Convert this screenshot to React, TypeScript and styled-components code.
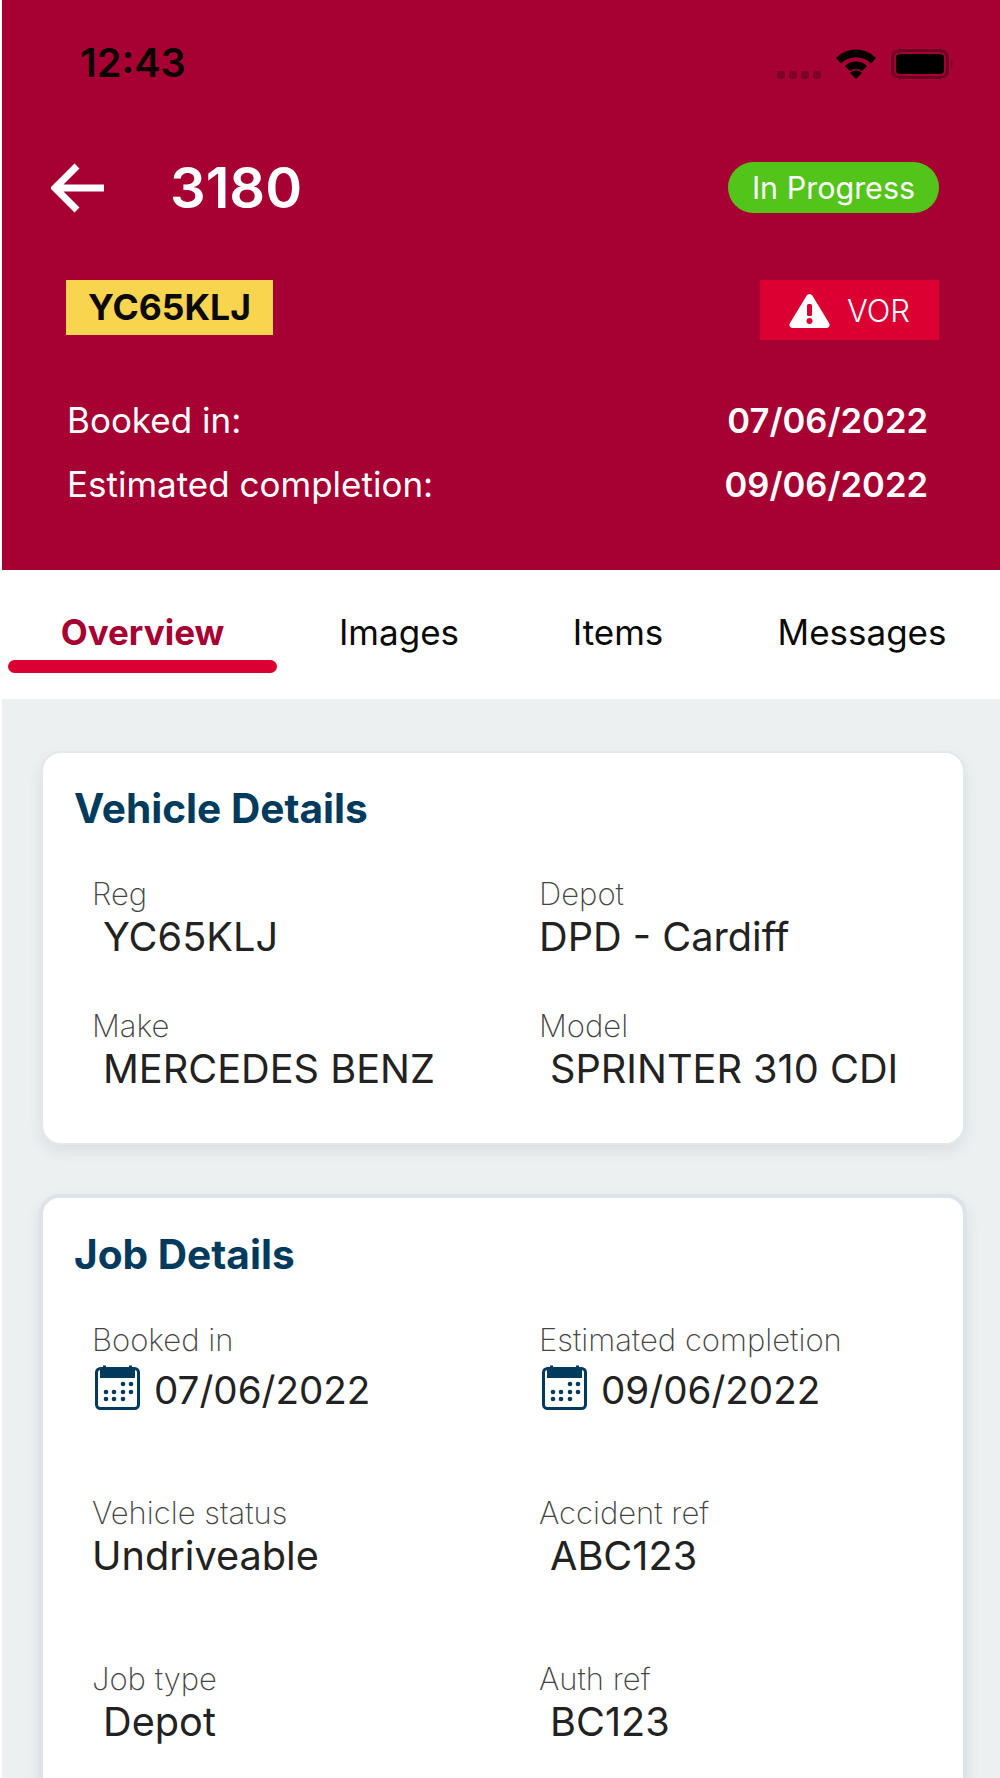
import React from "react";
import styled, { createGlobalStyle } from "styled-components";

const GlobalStyle = createGlobalStyle`
  html, body {
    margin: 0;
    padding: 0;
    background: #fff;
    height: 1778px;
    overflow: hidden;
  }
  * { box-sizing: border-box; }
`;

const Page = styled.div`
  width: 1000px;
  height: 1778px;
  overflow: hidden;
  padding-left: 2px;
  font-family: Inter, "Liberation Sans", sans-serif;
  background: #fff;
`;

///////////////////////
// Header
///////////////////////
const Header = styled.header`
  height: 570px;
  background: #a70033;
  color: #fff;
`;

const StatusBar = styled.div`
  height: 156px;
  padding: 40px 45px 0 78px;
  display: flex;
  justify-content: space-between;
  align-items: flex-start;
`;

const Clock = styled.div`
  font-size: 39.7px;
  line-height: 46px;
  font-weight: 600;
  color: #0a0006;
`;

const StatusIcons = styled.div`
  display: flex;
  align-items: flex-end;
  gap: 14px;
  margin-top: 7px;
`;

const TitleRow = styled.div`
  height: 64px;
  padding: 0 61px 0 49px;
  display: flex;
  align-items: center;
`;

const BackButton = styled.div`
  width: 119px;
  height: 52px;
  display: flex;
  align-items: center;
`;

const JobNumber = styled.h1`
  flex: 1;
  margin: 0;
  font-size: 56px;
  line-height: 64px;
  font-weight: 600;
`;

const StatusPill = styled.div`
  width: 211px;
  height: 51px;
  margin-top: -2px;
  border-radius: 26px;
  background: #52c41a;
  display: flex;
  align-items: center;
  justify-content: center;
  font-size: 30.5px;
`;

const PlateRow = styled.div`
  margin-top: 60px;
  padding: 0 61px 0 64px;
  display: flex;
  justify-content: space-between;
  align-items: flex-start;
`;

const Plate = styled.div`
  width: 207px;
  height: 55px;
  background: #f9d44f;
  color: #0a0a0a;
  display: flex;
  align-items: center;
  justify-content: center;
  font-size: 35.5px;
  font-weight: 700;
`;

const VorTag = styled.div`
  width: 179px;
  height: 60px;
  background: #dc0032;
  display: flex;
  align-items: center;
  justify-content: center;
  gap: 17px;
  font-size: 31px;
  font-weight: 300;
`;

const DateRows = styled.div`
  margin-top: 60px;
  padding: 0 72px 0 65px;
  display: flex;
  flex-direction: column;
  gap: 24px;
`;

const DateRow = styled.div`
  display: flex;
  justify-content: space-between;
  font-size: 35px;
  line-height: 40px;
`;

const DateValue = styled.span`
  font-size: 34.6px;
  font-weight: 600;
`;

///////////////////////
// Tabs
///////////////////////
const Tabs = styled.nav`
  height: 129px;
  padding-left: 6px;
  display: grid;
  grid-template-columns: 269px 244px 194px 294px;
  background: #fff;
`;

const Tab = styled.div<{ $active?: boolean }>`
  padding-top: 42px;
  text-align: center;
  font-size: 35px;
  line-height: 40px;
  font-weight: ${(p) => (p.$active ? 700 : 400)};
  color: ${(p) => (p.$active ? "#a70033" : "#0a0a0a")};
`;

const TabUnderline = styled.div`
  height: 13px;
  margin-top: 8px;
  border-radius: 7px;
  background: #dc0032;
`;

///////////////////////
// Cards
///////////////////////
const Content = styled.main`
  height: 1079px;
  padding: 52px 35px 0 39px;
  background: #ecf0f1;
  display: flex;
  flex-direction: column;
  gap: 49px;
`;

const Card = styled.section<{ $outlined?: boolean }>`
  flex-shrink: 0;
  background: #fff;
  border-radius: 20px;
  padding: 33px 32px 51px 31px;
  border: 2px solid #e2e8eb;
  box-shadow: 0 6px 14px rgba(60, 80, 100, 0.1);
  ${(p) => p.$outlined && "border: 4px solid #dde3e8; margin: 0 -2px 0 -2px; padding: 34px 30px 52px 31px;"}
`;

const CardTitle = styled.h2`
  margin: 0 0 45px;
  font-size: 40.6px;
  line-height: 46px;
  font-weight: 700;
  color: #003a5d;
`;

const FieldGrid = styled.div<{ $gap: number }>`
  display: grid;
  grid-template-columns: 447px 1fr;
  row-gap: ${(p) => p.$gap}px;
  padding-left: 18px;
`;

const Field = styled.div``;

const FieldLabel = styled.div`
  font-size: 31px;
  line-height: 34px;
  font-weight: 200;
  color: #444;
`;

const FieldValue = styled.div<{ $indent?: number; $date?: boolean }>`
  display: flex;
  align-items: center;
  gap: 13px;
  padding-left: ${(p) => p.$indent ?? 0}px;
  margin-top: ${(p) => (p.$date ? 10 : 3)}px;
  font-size: ${(p) => (p.$date ? 38.6 : 39.7)}px;
  line-height: 46px;
  color: #222;
`;

const CalendarSvg = styled.svg`
  flex-shrink: 0;
  margin-top: -5px;
`;

const WifiIcon = () => (
  <svg width="42" height="32" viewBox="0 0 42 32">
    <path d="M1 11 A28 28 0 0 1 41 11 L36 16.5 A21 21 0 0 0 6 16.5 Z" fill="#000" />
    <path d="M10 21 A16 16 0 0 1 32 21 L27 26 A9 9 0 0 0 15 26 Z" fill="#000" transform="translate(0 -2)" />
    <path d="M15 26 A8 8 0 0 1 27 26 L21 32 Z" fill="#000" />
  </svg>
);

const SignalDots = () => (
  <svg width="44" height="8" viewBox="0 0 44 8">
    {[0, 12, 24, 36].map((x) => (
      <rect key={x} x={x} width="8" height="8" rx="3" fill="#7d0029" />
    ))}
  </svg>
);

const BatteryIcon = () => (
  <svg width="64" height="30" viewBox="0 0 64 30">
    <rect x="1.5" y="1.5" width="55" height="27" rx="7" fill="none" stroke="#6d0024" strokeWidth="3" />
    <rect x="5" y="5" width="48" height="20" rx="4" fill="#000" />
    <path d="M60 10.5 Q63 15 60 19.5 Z" fill="#6d0024" />
  </svg>
);

const BackArrow = () => (
  <svg width="54" height="50" viewBox="0 0 54 50">
    <path d="M26 3 L4 25 L26 47 M4 25 H53" fill="none" stroke="#fff" strokeWidth="7" />
  </svg>
);

const WarningIcon = () => (
  <svg width="41" height="35" viewBox="0 0 41 35">
    <path
      d="M20.5 1 C22 1 23 2 23.6 3 L40 30 C41.5 32.5 40 35 37 35 H4 C1 35 -0.5 32.5 1 30 L17.4 3 C18 2 19 1 20.5 1 Z"
      fill="#fff"
    />
    <rect x="18" y="11" width="5" height="12" rx="1.5" fill="#dc0032" />
    <circle cx="20.5" cy="28" r="3" fill="#dc0032" />
  </svg>
);

const CalendarIcon = () => (
  <CalendarSvg width="46" height="46" viewBox="0 0 46 46">
    <rect x="1.5" y="3.5" width="42" height="40" rx="4" fill="none" stroke="#003a5d" strokeWidth="3" />
    <path d="M5 5 H40 V13 H5 Z" fill="#003a5d" />
    <rect x="8" y="0.5" width="3" height="4" fill="#003a5d" />
    <rect x="34" y="0.5" width="3" height="4" fill="#003a5d" />
    {[
      [28, 19],
      [36, 19],
      [11, 27],
      [19, 27],
      [28, 27],
      [36, 27],
      [11, 34],
      [19, 34],
      [28, 34],
    ].map(([cx, cy]) => (
      <circle key={`${cx}-${cy}`} cx={cx} cy={cy} r="2.3" fill="#003a5d" />
    ))}
  </CalendarSvg>
);

const App = () => {
  return (
    <Page>
      <GlobalStyle />
      <Header>
        <StatusBar>
          <Clock>12:43</Clock>
          <StatusIcons>
            <SignalDots />
            <WifiIcon />
            <BatteryIcon />
          </StatusIcons>
        </StatusBar>
        <TitleRow>
          <BackButton>
            <BackArrow />
          </BackButton>
          <JobNumber>3180</JobNumber>
          <StatusPill>In Progress</StatusPill>
        </TitleRow>
        <PlateRow>
          <Plate>YC65KLJ</Plate>
          <VorTag>
            <WarningIcon />
            VOR
          </VorTag>
        </PlateRow>
        <DateRows>
          <DateRow>
            <span>Booked in:</span>
            <DateValue>07/06/2022</DateValue>
          </DateRow>
          <DateRow>
            <span>Estimated completion:</span>
            <DateValue>09/06/2022</DateValue>
          </DateRow>
        </DateRows>
      </Header>

      <Tabs>
        <Tab $active>
          Overview
          <TabUnderline />
        </Tab>
        <Tab>Images</Tab>
        <Tab>Items</Tab>
        <Tab>Messages</Tab>
      </Tabs>

      <Content>
        <Card>
          <CardTitle>Vehicle Details</CardTitle>
          <FieldGrid $gap={49}>
            <Field>
              <FieldLabel>Reg</FieldLabel>
              <FieldValue $indent={11}>YC65KLJ</FieldValue>
            </Field>
            <Field>
              <FieldLabel>Depot</FieldLabel>
              <FieldValue>DPD - Cardiff</FieldValue>
            </Field>
            <Field>
              <FieldLabel>Make</FieldLabel>
              <FieldValue $indent={11}>MERCEDES BENZ</FieldValue>
            </Field>
            <Field>
              <FieldLabel>Model</FieldLabel>
              <FieldValue $indent={11}>SPRINTER 310 CDI</FieldValue>
            </Field>
          </FieldGrid>
        </Card>

        <Card $outlined>
          <CardTitle>Job Details</CardTitle>
          <FieldGrid $gap={83}>
            <Field>
              <FieldLabel>Booked in</FieldLabel>
              <FieldValue $indent={3} $date>
                <CalendarIcon />
                07/06/2022
              </FieldValue>
            </Field>
            <Field>
              <FieldLabel>Estimated completion</FieldLabel>
              <FieldValue $indent={3} $date>
                <CalendarIcon />
                09/06/2022
              </FieldValue>
            </Field>
            <Field>
              <FieldLabel>Vehicle status</FieldLabel>
              <FieldValue>Undriveable</FieldValue>
            </Field>
            <Field>
              <FieldLabel>Accident ref</FieldLabel>
              <FieldValue $indent={11}>ABC123</FieldValue>
            </Field>
            <Field>
              <FieldLabel>Job type</FieldLabel>
              <FieldValue $indent={11}>Depot</FieldValue>
            </Field>
            <Field>
              <FieldLabel>Auth ref</FieldLabel>
              <FieldValue $indent={11}>BC123</FieldValue>
            </Field>
          </FieldGrid>
        </Card>
      </Content>
    </Page>
  );
};

export default App;
